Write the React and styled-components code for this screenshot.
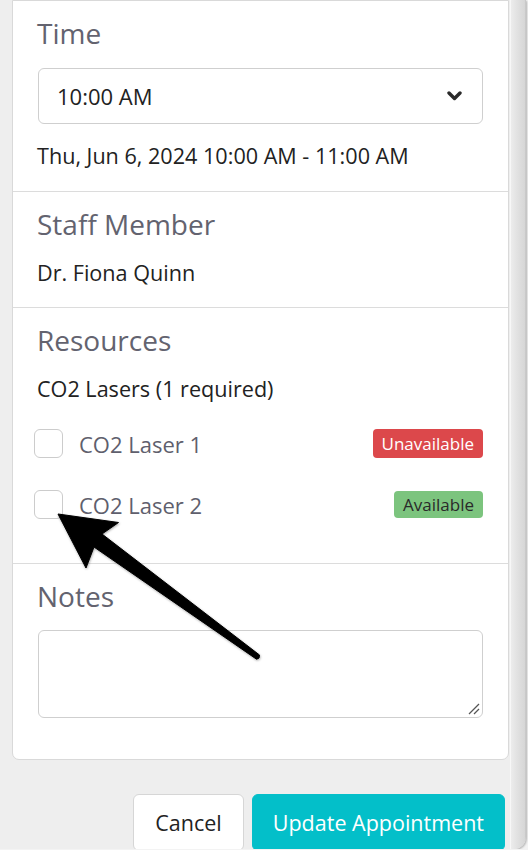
import React from "react";
import styled, { createGlobalStyle } from "styled-components";

const Global = createGlobalStyle`
  html, body { margin: 0; padding: 0; background: #f3f3f3; }
  body { font-family: "Open Sans", "Liberation Sans", sans-serif; }
  * { box-sizing: border-box; }
`;

const Modal = styled.div`
  position: relative;
  width: 526px;
  height: 849px;
  background: #eeeeee;
  display: flex;
  border-radius: 0 0 12px 0;
  box-shadow: 1px 1px 2px rgba(0, 0, 0, 0.25);
  overflow: hidden;
`;

const Main = styled.div`
  width: 510px;
  padding-left: 12px;
  display: flex;
  flex-direction: column;
`;

const Track = styled.div`
  flex: 1;
  border-left: 1px solid #f7f7f7;
  border-right: 1px solid #c9c9c9;
  background: linear-gradient(to right, #ececec, #dedede 60%, #d6d6d6);
`;

const Card = styled.div`
  width: 497px;
  background: #ffffff;
  border: 1px solid #d9d9d9;
  border-radius: 0 0 7px 7px;
`;

const Section = styled.div`
  padding: ${(p) => p.$pad || "15px 25px 22px 25px"};
  & + & { border-top: 1px solid #dcdcdc; }
`;

const Heading = styled.h2`
  margin: 0 0 0 -1px;
  font-size: 28px;
  line-height: 34px;
  font-weight: 400;
  color: #63636f;
`;

const Text = styled.div`
  margin-top: ${(p) => p.$mt || "20px"};
  margin-left: -1px;
  font-size: 21.6px;
  line-height: 24px;
  color: #222222;
`;

const Select = styled.div`
  margin-top: 18px;
  height: 56px;
  border: 1px solid #cfcfcf;
  border-radius: 6px;
  display: flex;
  align-items: center;
  justify-content: space-between;
  padding: 0 20px 0 18px;
  font-size: 22px;
  color: #222222;
`;

const Row = styled.div`
  margin-top: ${(p) => p.$mt};
  height: 29px;
  display: flex;
  align-items: center;
`;

const Check = styled.span`
  width: 29px;
  height: 29px;
  margin-left: -4px;
  border: 1px solid #cccccc;
  border-radius: 6px;
  background: #fff;
  flex: none;
`;

const Label = styled.span`
  margin-left: 16px;
  font-size: 22px;
  color: #5f5f6d;
  flex: 1;
`;

const Badge = styled.span`
  height: ${(p) => (p.$ok ? "27px" : "29px")};
  padding: 0 9px;
  display: inline-flex;
  align-items: center;
  border-radius: 4px;
  font-size: 17px;
  background: ${(p) => (p.$ok ? "#7cc47e" : "#dc484b")};
  color: ${(p) => (p.$ok ? "#2a2a2a" : "#ffffff")};
`;

const Notes = styled.div`
  position: relative;
  margin-top: 17px;
  height: 88px;
  border: 1px solid #cfcfcf;
  border-radius: 6px;
`;

const Grip = styled.svg`
  position: absolute;
  right: 2px;
  bottom: 2px;
`;

const Footer = styled.div`
  margin-top: 34px;
  padding-right: 5px;
  display: flex;
  justify-content: flex-end;
  gap: 8px;
`;

const Button = styled.button`
  height: 57px;
  padding: 0 ${(p) => (p.$primary ? "20px" : "21px")};
  border-radius: 6px;
  border: 1px solid ${(p) => (p.$primary ? "#05bfc9" : "#d6d6d6")};
  background: ${(p) => (p.$primary ? "#03bfc9" : "#ffffff")};
  color: ${(p) => (p.$primary ? "#ffffff" : "#222222")};
  font-family: inherit;
  font-size: 21.5px;
`;

const Overlay = styled.svg`
  position: absolute;
  left: 0;
  top: 0;
  pointer-events: none;
`;

export default function App() {
  return (
    <>
      <Global />
      <Modal>
        <Main>
          <Card>
            <Section $pad="15px 25px 23px 25px">
              <Heading>Time</Heading>
              <Select>
                <span>10:00 AM</span>
                <svg width="15" height="10" viewBox="0 0 15 10">
                  <polyline points="2,2 7.5,7.5 13,2" fill="none" stroke="#2a2a2a" strokeWidth="3.4" strokeLinecap="round" strokeLinejoin="round" />
                </svg>
              </Select>
              <Text>Thu, Jun 6, 2024 10:00 AM - 11:00 AM</Text>
            </Section>
            <Section>
              <Heading>Staff Member</Heading>
              <Text>Dr. Fiona Quinn</Text>
            </Section>
            <Section $pad="15px 25px 44px 25px">
              <Heading>Resources</Heading>
              <Text>CO2 Lasers (1 required)</Text>
              <Row $mt="28px">
                <Check />
                <Label>CO2 Laser 1</Label>
                <Badge>Unavailable</Badge>
              </Row>
              <Row $mt="32px">
                <Check />
                <Label>CO2 Laser 2</Label>
                <Badge $ok>Available</Badge>
              </Row>
            </Section>
            <Section $pad="15px 25px 41px 25px">
              <Heading>Notes</Heading>
              <Notes>
                <Grip width="12" height="12" viewBox="0 0 12 12">
                  <line x1="1" y1="11" x2="11" y2="1" stroke="#555" strokeWidth="1.2" />
                  <line x1="6" y1="11" x2="11" y2="6" stroke="#555" strokeWidth="1.2" />
                </Grip>
              </Notes>
            </Section>
          </Card>
          <Footer>
            <Button>Cancel</Button>
            <Button $primary>Update Appointment</Button>
          </Footer>
        </Main>
        <Track />
        <Overlay width="528" height="850" viewBox="0 0 528 850">
          <defs>
            <filter id="sh" x="-20%" y="-20%" width="140%" height="140%">
              <feDropShadow dx="0.5" dy="1" stdDeviation="1.2" floodColor="#000" floodOpacity="0.35" />
            </filter>
          </defs>
          <path
            d="M58 514 L118.5 522.5 L102 534 L259.5 655 Q260 659 256.5 659.2 L94 547 L86 568 Z"
            fill="#000"
            stroke="#000"
            strokeWidth="1"
            strokeLinejoin="round"
            filter="url(#sh)"
          />
        </Overlay>
      </Modal>
    </>
  );
}
